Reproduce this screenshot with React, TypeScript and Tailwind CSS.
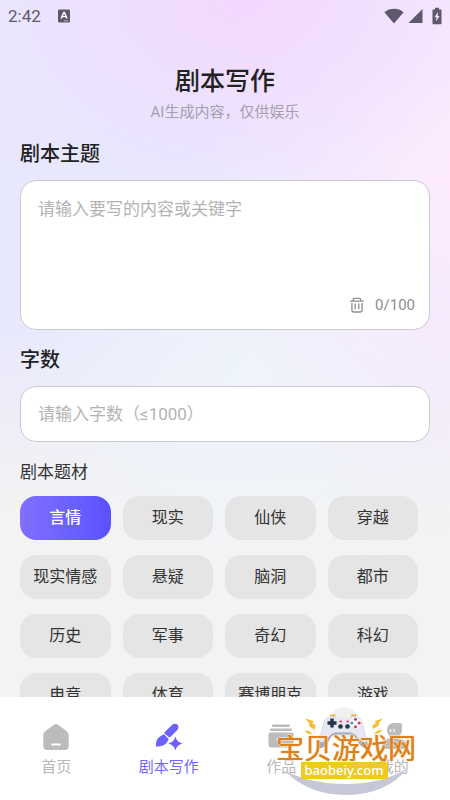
import * as React from "react";

const genres = [
  "言情", "现实", "仙侠", "穿越",
  "现实情感", "悬疑", "脑洞", "都市",
  "历史", "军事", "奇幻", "科幻",
  "电竞", "体育", "赛博朋克", "游戏",
];

function StatusBar() {
  return (
    <div className="flex h-8 items-center justify-between pl-2 pr-2 text-[#5f5a6b]">
      <div className="flex items-center gap-4">
        <span className="text-[17px] leading-8">2:42</span>
        <svg className="h-3.5 w-3.5" viewBox="0 0 14 14">
          <rect x="1" y="0.5" width="12" height="13" rx="1.2" fill="currentColor" />
          <path d="M4.2 9.6 6.8 3.4h.6L10 9.6M5.2 7.6h3.8" fill="none" stroke="#fff" strokeWidth="1.4" />
          <path d="M7 11.8h4" stroke="#c9c4d4" strokeWidth="0.8" />
        </svg>
      </div>
      <div className="flex items-center">
        <svg className="h-4 w-5" viewBox="0 0 20 16">
          <path d="M0.4 4.2C5.6-.4 14.400-.4 19.600 4.200L10 15.600z" fill="currentColor" />
        </svg>
        <svg className="ml-1 h-4 w-4" viewBox="0 0 16 16">
          <path d="M14.500 1v14H0.500z" fill="currentColor" />
        </svg>
        <svg className="ml-2 h-[18px] w-2.5" viewBox="0 0 10 18">
          <path d="M3 .8h4v1.600h1.600q.9 0 .9.9v13q0 .9-.9.9H1.400q-.9 0-.9-.9v-13q0-.9.9-.9H3z" fill="currentColor" />
          <path d="M6 4.800 2.600 10.200h1.900L4 14.600l3.600-5.600H5.700z" fill="#f3e4fd" />
        </svg>
      </div>
    </div>
  );
}

function TrashIcon() {
  return (
    <svg className="h-4 w-4" viewBox="0 0 16 16" fill="none" stroke="currentColor" strokeWidth="1.3">
      <path d="M1.200 4.200h13.600M4.300 4V2.600q0-1.200 1.200-1.200h5q1.200 0 1.200 1.200V4" />
      <path d="M2.900 6v7.300q0 1.700 1.700 1.700h6.800q1.700 0 1.700-1.700V6M6.200 6.600v5.600M9.800 6.600v5.600" />
    </svg>
  );
}

function HomeIcon() {
  return (
    <svg className="h-7 w-7" viewBox="0 0 28 28">
      <path d="M11.800 1.700q2.200-1.500 4.400 0l8.600 6.500q1.900 1.500 1.900 3.900v11q0 4-4 4H5.300q-4 0-4-4v-11q0-2.400 1.900-3.900z" fill="#bcbcbc" />
      <path d="M10 21.500h8" stroke="#fff" strokeWidth="2" strokeLinecap="round" />
    </svg>
  );
}

function BrushIcon() {
  return (
    <svg className="h-7 w-7" viewBox="0 0 28 28">
      <g fill="#6c62fb">
        <path d="M9.600 9.300 17.200 1.800Q19.800-.4 22.400 1.600 24.600 4.200 22.400 6.900L15.400 14q-1 .8-2-.2L9.500 10.500q-.5-.6.100-1.200z" />
        <path d="M8.300 11.600q.5-.5 1 0l4.100 4.100q.5.5.1 1.100l-1.700 2.800Q8.800 23.900.8 23.500.5 16.200 5 13.500z" />
        <path d="M20.400 13.400Q21.600 19.200 27.600 20.400 21.600 21.600 20.400 27.600 19.200 21.600 13.200 20.400 19.200 19.200 20.400 13.400z" />
      </g>
    </svg>
  );
}

function WorksIcon() {
  return (
    <svg className="h-7 w-7" viewBox="0 0 28 28" fill="#bcbcbc">
      <rect x="5" y="1.500" width="18" height="2.400" rx="1" />
      <rect x="3" y="5.500" width="22" height="2.400" rx="1" />
      <path d="M3 9.500h22q1.500 0 1.500 2v10q0 3-3 3h-19q-3 0-3-3v-10q0-2 1.500-2z" />
      <path d="M10 16.500h8" stroke="#fff" strokeWidth="1.600" strokeLinecap="round" />
    </svg>
  );
}

function ProfileIcon() {
  return (
    <svg className="h-7 w-7" viewBox="0 0 28 28">
      <path d="M14 0h6q2 0 2 2v5.500a7.500 7.500 0 1 1-15 0Q7 0 14 0z" fill="#bcbcbc" />
      <path d="M5 17q9-5 18 0 3.500 1.500 3.500 5v1q0 3-3 3H5q-3 0-3-3v-1q0-3.500 3-5z" fill="#bcbcbc" />
      <path d="M10.500 7v1.500M14 7v1.500" stroke="#fff" strokeWidth="1.400" strokeLinecap="round" />
    </svg>
  );
}

const tabs = [
  { label: "首页", icon: <HomeIcon /> },
  { label: "剧本写作", icon: <BrushIcon /> },
  { label: "作品", icon: <WorksIcon /> },
  { label: "我的", icon: <ProfileIcon /> },
];

// Site badge that floats over the right end of the tab bar
function SiteBadge() {
  return (
    <div className="pointer-events-none absolute bottom-0 right-8 flex h-[94px] w-36 flex-col items-center">
      <svg className="absolute inset-0 h-[94px] w-36" viewBox="0 0 144 94">
        <circle cx="70" cy="17" r="15.500" fill="#f0f0f1" />
        {/* smile */}
        <path d="M10 64Q34 89 72 89 112 89 134 62 108 78 72 78 36 78 10 64z" fill="#c6c8d8" />
        {/* controller */}
        <path d="M56 9.500h5.500M77 9.500h5.500" stroke="#efb33c" strokeWidth="2" />
        <path d="M56 10.500Q60 9.500 63 12h13q3-2.500 7-1.500 5 1 7 10l4 16q1.500 7-3 5.500-5-2-9-10-2-3.500-5-3.500H62q-3 0-5 3.500-4 8-9 10-4.500 1.500-3-5.500l4-16q2-9 7-10z" transform="translate(-0.500 0)" fill="#a3a8ba" />
        <path d="M56 10.500Q60 9.500 63 12h13q3-2.500 7-1.500 5 1 7 10l3 12q1 5-3 3.500-4-1.500-8-7-2-2.500-5-2.500H62q-3 0-5 2.500-4 5.500-8 7-4 1.500-3-3.500l3-12q2-9 7-10z" transform="translate(-0.500 0)" fill="#e5e7f1" />
        <path d="M58 12.500v9M53.500 17h9" stroke="#253449" strokeWidth="3.400" />
        <circle cx="81.500" cy="17" r="5.800" fill="#fafaff" />
        <circle cx="81.500" cy="13.300" r="1.500" fill="#d93b4c" />
        <circle cx="81.500" cy="20.700" r="1.500" fill="#d93b4c" />
        <circle cx="77.800" cy="17" r="1.500" fill="#35a2d1" />
        <circle cx="85.200" cy="17" r="1.500" fill="#e0334f" />
        <circle cx="66.500" cy="20.500" r="2.300" fill="#253449" />
        <circle cx="73.500" cy="20.500" r="2.300" fill="#253449" />
        <path d="M65.500 15.500h2.500M72.500 15.500h2.500" stroke="#d93b4c" strokeWidth="1.500" />
        {/* sparks */}
        <g fill="#f6bb31">
          <path d="M31 12.500 39.500 15 38.500 18 41.500 19 40.500 24 34.500 19.500 36 18z" />
          <path d="M30.500 24.500 35 25 39 28.500 33.500 27.500z" />
          <path d="M108.500 12.500 101 15 101.500 18 98.500 19 99 23 105.500 19 104.500 17.500z" />
          <path d="M108.500 24 103.500 24.500 99.500 28 105 27z" />
        </g>
      </svg>
      <span className="relative mt-8 whitespace-nowrap text-[28px] leading-6 text-[#e0801a] [paint-order:stroke] [-webkit-text-stroke:1px_#fff] [text-shadow:0_0_1px_#e0801a]">
        宝贝游戏网
      </span>
      <span className="relative mr-1 h-[17px] bg-[#edcb22] px-1 font-['Noto_Sans'] text-[13px] font-medium leading-4 text-white">
        baobeiy.com
      </span>
    </div>
  );
}

export default function App() {
  const [topic, setTopic] = React.useState("");
  const [count, setCount] = React.useState("");
  const [genre, setGenre] = React.useState("言情");
  const [tab, setTab] = React.useState("剧本写作");

  return (
    <div className="relative flex h-screen flex-col overflow-hidden bg-[#f3f3f3] bg-[radial-gradient(ellipse_60%_24%_at_54%_0%,#f3d8fd_0%,#f3d8fd00_100%),radial-gradient(ellipse_60%_45%_at_104%_22%,#ffebfd_0%,#ffebfd00_100%),radial-gradient(ellipse_50%_30%_at_55%_48%,#eff5fb_0%,#eff5fb00_100%),linear-gradient(to_bottom,#e9e7fe_0%,#e7e7fe_38%,#f3f3f3_64%)] font-[Roboto,'Noto_Sans_CJK_SC',sans-serif] text-[#222]">
      <StatusBar />

      <main className="min-h-0 flex-1 overflow-hidden px-5">
        <header className="pt-8 text-center">
          <h1 className="text-[25px] font-medium leading-9">剧本写作</h1>
          <p className="text-[15px] leading-6 text-[#a3a0aa]">AI生成内容，仅供娱乐</p>
        </header>

        <label htmlFor="topic" className="mt-4 block text-xl font-medium leading-7">
          剧本主题
        </label>
        <div className="mt-3 flex h-[150px] flex-col rounded-2xl border border-[#cbcbcf] bg-white pb-3 pl-[17px] pr-3.5 pt-4">
          <textarea
            id="topic"
            maxLength={100}
            value={topic}
            onChange={(e) => setTopic(e.target.value)}
            placeholder="请输入要写的内容或关键字"
            className="min-h-0 flex-1 resize-none text-[17px] leading-6 outline-none placeholder:text-[#b3b3b3]"
          />
          <div className="flex items-center justify-end gap-2.5 text-[#8d8d8d]">
            <button type="button" aria-label="清空" onClick={() => setTopic("")}>
              <TrashIcon />
            </button>
            <span className="text-[15px] leading-6">{topic.length}/100</span>
          </div>
        </div>

        <label htmlFor="count" className="mt-4 block text-xl font-medium leading-7">
          字数
        </label>
        <input
          id="count"
          value={count}
          onChange={(e) => setCount(e.target.value)}
          placeholder="请输入字数（≤1000）"
          className="mt-3 h-14 w-full rounded-2xl border border-[#cbcbcf] bg-white px-[17px] text-[17px] outline-none placeholder:text-[#b3b3b3]"
        />

        <h2 className="mt-4 text-[17px] leading-7 text-[#333]">剧本题材</h2>
        <div className="mt-2.5 grid grid-cols-4 gap-x-3 gap-y-[15px] pr-3">
          {genres.map((g) => (
            <button
              key={g}
              type="button"
              onClick={() => setGenre(g)}
              className={
                g === genre
                  ? "h-11 whitespace-nowrap rounded-2xl bg-linear-to-r from-[#8170ff] to-[#5a51ff] text-base font-medium text-white"
                  : "h-11 whitespace-nowrap rounded-2xl bg-[#e5e5e5] text-base text-[#333]"
              }
            >
              {g}
            </button>
          ))}
        </div>
      </main>

      <nav className="grid h-[103px] shrink-0 grid-cols-4 bg-white pt-[26px]">
        {tabs.map((t) => (
          <button
            key={t.label}
            type="button"
            onClick={() => setTab(t.label)}
            className={
              t.label === tab
                ? "flex flex-col items-center gap-1 text-[15px] leading-6 text-[#7167f5]"
                : "flex flex-col items-center gap-1 text-[15px] leading-6 text-[#b8b8b8]"
            }
          >
            {t.icon}
            {t.label}
          </button>
        ))}
      </nav>

      <SiteBadge />
    </div>
  );
}
